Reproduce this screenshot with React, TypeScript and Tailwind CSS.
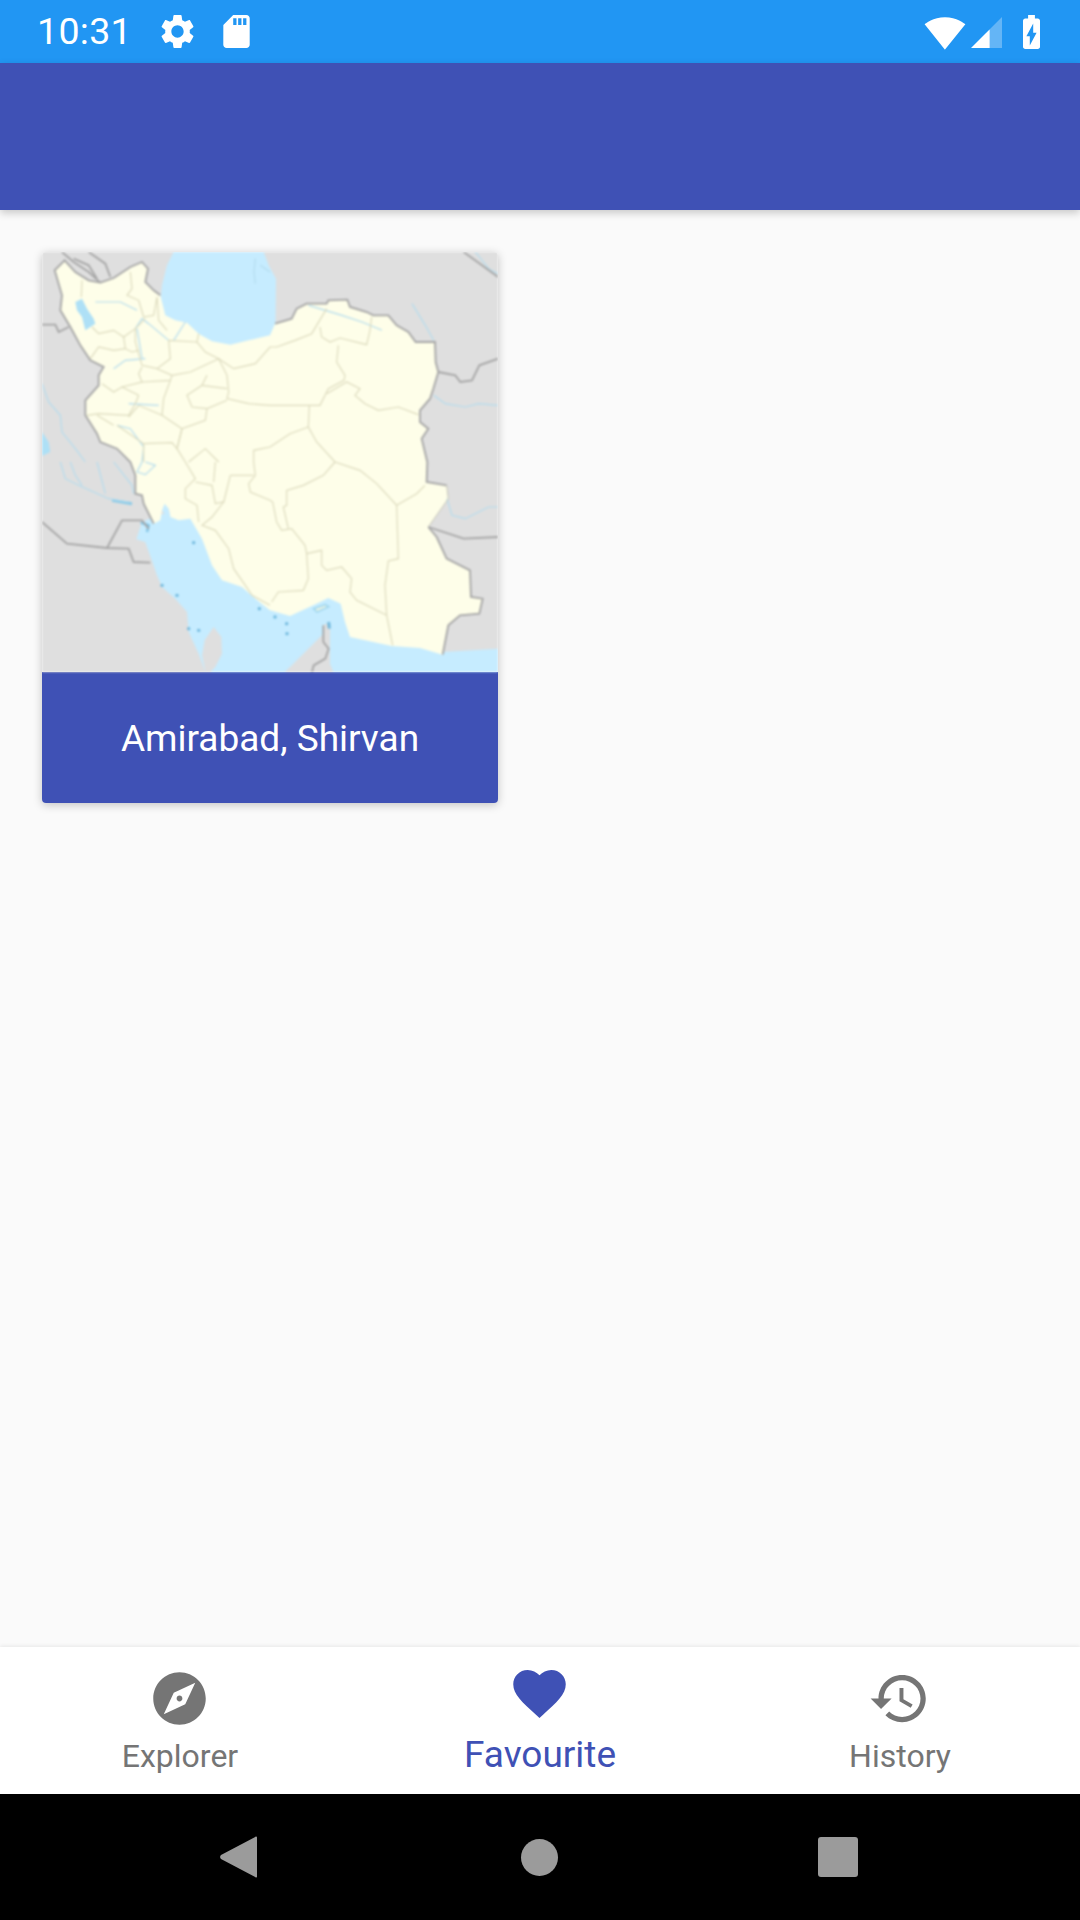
import * as React from 'react';

const iran = "68,25 100,60 140,85 175,92 215,78 265,45 300,30 318,50 310,90 335,115 355,130 360,150 370,190 400,205 435,212 470,245 510,268 565,278 620,265 684,250 699,215 749,200 764,170 794,155 854,155 859,145 916,143 924,165 974,180 994,190 1039,190 1064,220 1099,240 1121,270 1179,270 1181,330 1189,360 1174,410 1164,440 1134,475 1134,510 1159,530 1139,560 1156,630 1154,690 1214,700 1219,740 1159,825 1184,855 1214,920 1284,955 1287,1035 1322,1040 1312,1085 1254,1090 1219,1120 1202,1208 1134,1188 1049,1182 924,1155 909,1110 896,1055 859,1038 814,1060 744,1092 684,1075 640,1040 600,1005 540,985 510,940 480,860 445,800 410,805 385,795 380,770 360,775 355,805 335,815 305,755 300,730 280,725 280,670 265,630 225,590 175,570 165,545 130,490 130,445 170,400 170,370 185,345 145,325 115,280 85,225 55,175 60,130 38,55";
const caspian = "395,0 665,0 680,40 702,80 700,258 684,262 620,270 565,283 510,273 470,250 435,217 400,210 370,195 355,150 360,100 375,40";
const gulf = "300,810 283,862 310,870 345,970 360,1005 400,1040 435,1080 440,1140 470,1205 490,1260 729,1260 844,1145 844,1120 864,1110 864,1235 874,1260 1368,1260 1368,1190 1202,1200 900,1000 500,760 345,790";
const qatar = "480,1210 488,1165 515,1125 538,1155 540,1205 520,1245 505,1260 490,1260";
const urmia = "100,150 120,140 135,170 155,200 160,215 130,235 120,195 105,175";

// outer borders of the countries
const borders = [
    "355,130 335,115 310,90 318,50 300,30 265,45 215,78 175,92 140,85 100,60 68,25 38,55 60,130 55,175 85,225 115,280 145,325 185,345 170,370 170,400 130,445 130,490 165,545 175,570 225,590 265,630 280,670 280,725 300,730 305,755 335,815",
    "699,215 749,200 764,170 794,155 854,155 859,145 916,143 924,165 974,180 994,190 1039,190 1064,220 1099,240 1121,270 1179,270 1181,330 1189,360 1174,410 1164,440 1134,475 1134,510 1159,530 1139,560 1156,630 1154,690 1214,700",
    "1159,825 1184,855 1214,920 1284,955 1287,1035 1322,1040 1312,1085 1254,1090 1219,1120 1202,1208",
    "60,0 95,30 140,60 175,92",
    "95,20 140,40 165,80",
    "140,0 190,35 205,75",
    "0,218 40,218 50,240 80,225",
    "1265,0 1320,40 1368,75",
    "1189,360 1240,370 1255,390 1290,385 1312,340 1368,320",
    "1159,825 1265,860 1368,855",
    "0,810 75,875 195,888 260,890 275,930 325,932",
    "195,888 240,805 300,805 320,830",
    "844,1120 844,1170 860,1190 850,1220 815,1240 810,1260",
];

// provinces
const provinces = [
    "265,60 270,110 255,130 290,145 305,195 335,190 345,135 350,205 375,235",
    "120,85 118,135",
    "150,225 170,245 215,235 245,255 280,230 310,200",
    "245,255 250,290 270,300 290,295",
    "145,320 170,285 215,295 250,290",
    "280,230 280,270 300,340 345,350 385,320 380,265 465,270",
    "470,245 465,270 490,300 530,320 445,360 390,370 345,350",
    "530,320 575,350 640,335 684,285 704,285 759,265 809,245 854,170",
    "530,320 555,370 560,420 555,440 620,455 684,460 834,460 859,410 906,385 909,370 884,330 889,280",
    "300,345 290,365 300,390 240,405 215,420 180,395",
    "300,390 385,385 390,370",
    "385,385 365,440 360,490 420,530 405,590",
    "290,430 240,405",
    "290,430 280,455 260,490 170,485 135,490",
    "165,490 215,520",
    "260,495 290,460 360,490",
    "225,520 305,575 390,572 405,590 420,530 490,505 495,470 555,445",
    "495,370 480,400 435,430 450,465 495,470",
    "480,400 555,410",
    "405,590 430,630 460,680 430,710 430,740 465,760 470,810",
    "440,630 490,590 530,630",
    "305,575 305,630",
    "834,225 839,255 864,270 894,258 974,278 984,235 989,195",
    "854,425 914,390 954,410 939,430 969,455 1009,475 1069,465 1129,488",
    "802,460 799,525 824,570 879,630 954,655 1004,695 1064,760 1069,920 1039,927 1029,1000 1034,1090 1052,1180",
    "1064,760 1124,725 1149,700",
    "799,525 744,545 684,585 635,595 635,630 640,670 620,695 625,720 684,745 692,750 704,810 719,835 749,830 789,880 794,905 799,980 784,1015 709,1020 689,1050",
    "879,630 844,670 784,700 734,715 734,760 724,765 739,830",
    "794,905 839,895 839,940 854,955 899,945 929,980 924,1020 944,1045 1034,1090",
    "460,690 510,700 520,755 545,750 510,795 480,820 520,835 560,890 575,950 610,1000 630,1030 684,1060",
    "520,630 515,690",
    "565,670 545,750",
    "565,670 635,670",
];

const rivers = [
    "55,630 70,680 110,700 200,740 260,750",
    "85,630 100,670 120,700",
    "165,630 190,725",
    "215,630 270,700 275,725",
    "0,395 20,450 55,490 60,540 100,590 130,630",
    "160,150 235,150 285,175",
    "215,350 250,325 310,320",
    "280,230 300,200 320,215 380,265",
    "285,230 300,320",
    "260,455 350,460",
    "225,520 265,530 305,585 300,630 285,660 310,668 340,640 310,630",
    "395,265 430,210",
    "800,160 900,190 960,210 1020,235",
    "1110,155 1150,220 1175,265",
    "1175,430 1210,455 1270,465 1310,455 1368,460",
    "1300,0 1340,50 1368,65",
    "1215,740 1230,790 1270,800 1340,765 1368,765",
    "640,20 636,60 640,95",
    "655,40 684,60",
];

// little dark blue dots along the gulf coast
const dots = [[455, 872], [405, 1030], [360, 1000], [652, 1070], [734, 1115], [699, 1095], [440, 1130], [470, 1135], [735, 1145]];

const MapPicture = () => (
    <svg viewBox="0 0 1368 1260" preserveAspectRatio="none" className="w-full h-full block blur-[1px]">
        <rect width="1368" height="1260" fill="#dfdfdf" />
        <polygon points={caspian} fill="#c6ecff" />
        <polygon points={gulf} fill="#c6ecff" />
        <polygon points={qatar} fill="#dfdfdf" />
        <polygon points={iran} fill="#fefee9" />
        <polygon points={urmia} fill="#aee0f6" />
        <polygon points="0,540 20,570 25,600 0,612" fill="#aee0f6" />
        <polygon points="360,775 368,755 380,770 385,795 370,790" fill="#c6ecff" />
        <polyline points="210,745 270,755" fill="none" stroke="#8ccbe8" strokeWidth="9" />
        <polyline points="296,812 320,820 315,840" fill="none" stroke="#7fc4e6" strokeWidth="7" />
        <polygon points="815,1070 850,1058 860,1064 825,1080" fill="#eef6e6" stroke="#a0d6ee" strokeWidth="5" />
        <polyline points="860,1110 862,1130" fill="none" stroke="#6fb8dd" strokeWidth="9" />
        {dots.map(([x, y], index) => (
            <circle key={index} cx={x} cy={y} r="5" fill="#6fb8dd" />
        ))}
        {rivers.map((pts, index) => (
            <polyline key={index} points={pts} fill="none" stroke="#b4dcee" strokeWidth="3.5" />
        ))}
        {provinces.map((pts, index) => (
            <polyline key={index} points={pts} fill="none" stroke="#dddbbe" strokeWidth="3.5" />
        ))}
        <polyline points="1214,700 1219,740 1159,825" fill="none" stroke="#c4c4b8" strokeWidth="3" />
        {borders.map((pts, index) => (
            <polyline key={index} points={pts} fill="none" stroke="#a6a6a6" strokeWidth="5.5" />
        ))}
    </svg>
);

const NavItem = ({ path, label, active }: { path: string, label: string, active?: boolean }) => (
    <div className={`flex-1 flex flex-col items-center ${active ? 'text-[#3f51b5] pt-[15px]' : 'text-[#757575] pt-[20px]'}`}>
        <svg viewBox="0 0 24 24" fill="currentColor" className="w-[63px] h-[63px] -ml-[2px]">
            <path d={path} />
        </svg>
        <span className={active ? 'text-[37px] leading-[43px] mt-[8px]' : 'text-[32px] leading-[37px] mt-[8px]'}>{label}</span>
    </div>
);

export default function App() {
    return (
        <div className="w-[1080px] h-[1920px] flex flex-col bg-[#fafafa] overflow-hidden font-['Roboto',sans-serif]">
            <div className="h-[63px] bg-[#2196f3] flex items-center text-white shrink-0">
                <span className="ml-[37px] text-[37.5px] leading-none tracking-[0.3px]">10:31</span>
                <svg viewBox="0 0 24 24" fill="currentColor" className="w-[41px] h-[41px] ml-[25px] -mt-[1px]">
                    <path d="M19.14 12.94c.04-.3.06-.61.06-.94 0-.32-.02-.64-.07-.94l2.03-1.58c.18-.14.23-.41.12-.61l-1.92-3.32c-.12-.22-.37-.29-.59-.22l-2.39.96c-.5-.38-1.03-.7-1.62-.94l-.36-2.54c-.04-.24-.24-.41-.48-.41h-3.84c-.24 0-.43.17-.47.41l-.36 2.54c-.59.24-1.13.57-1.62.94l-2.39-.96c-.22-.08-.47 0-.59.22L2.74 8.87c-.12.21-.08.47.12.61l2.03 1.58c-.05.3-.09.63-.09.94s.02.64.07.94l-2.03 1.58c-.18.14-.23.41-.12.61l1.92 3.32c.12.22.37.29.59.22l2.39-.96c.5.38 1.03.7 1.62.94l.36 2.54c.05.24.24.41.48.41h3.84c.24 0 .44-.17.47-.41l.36-2.54c.59-.24 1.13-.56 1.62-.94l2.39.96c.22.08.47 0 .59-.22l1.92-3.32c.12-.22.07-.47-.12-.61l-2.01-1.58zM12 15.6c-1.98 0-3.6-1.62-3.6-3.6s1.62-3.6 3.6-3.6 3.6 1.62 3.6 3.6-1.62 3.6-3.6 3.6z" />
                </svg>
                <svg viewBox="4 2 16 20" fill="currentColor" className="w-[27px] h-[33px] ml-[25px]">
                    <path d="M18 2h-8L4.02 8 4 20c0 1.1.9 2 2 2h12c1.1 0 2-.9 2-2V4c0-1.1-.9-2-2-2zm-6 6h-2V4h2v4zm3 0h-2V4h2v4zm3 0h-2V4h2v4z" />
                </svg>
                <div className="ml-auto flex items-center">
                    <svg viewBox="0 0 24 24" fill="currentColor" className="w-[42px] h-[42px] mt-[2px]">
                        <path d="M12.01 21.49L23.64 7c-.45-.34-4.93-4-11.64-4C5.28 3 .81 6.66.36 7l11.63 14.5.01.01.01-.01z" />
                    </svg>
                    <svg viewBox="0 0 31 31" fill="currentColor" className="w-[32px] h-[32px] ml-[4px]">
                        <path d="M1 31L31 1v30z" opacity="0.3" />
                        <path d="M1 31L19 13v18z" />
                    </svg>
                    <svg viewBox="7 2 10 20" fill="currentColor" className="w-[19px] h-[34px] ml-[20px] mr-[39px]">
                        <path d="M15.67 4H14V2h-4v2H8.33C7.6 4 7 4.6 7 5.33v15.33C7 21.4 7.6 22 8.33 22h7.33c.74 0 1.34-.6 1.34-1.33V5.33C17 4.6 16.4 4 15.67 4zM11 20v-5.5H9L13 7v5.5h2L11 20z" />
                    </svg>
                </div>
            </div>
            <div className="h-[147px] bg-[#3f51b5] shrink-0 shadow-[0_3px_8px_rgba(0,0,0,0.2)] z-10"></div>
            <div className="flex-1 pt-[42px] pl-[42px]">
                <div className="w-[456px] rounded-[4px] overflow-hidden shadow-[0_2px_10px_rgba(0,0,0,0.22)]">
                    <div className="h-[420px]">
                        <MapPicture />
                    </div>
                    <div className="h-[131px] pt-[3px] bg-[#3f51b5] flex items-center justify-center text-white text-[37px]">
                        Amirabad, Shirvan
                    </div>
                </div>
            </div>
            <div className="h-[147px] bg-white flex shrink-0 shadow-[0_-1px_4px_rgba(0,0,0,0.08)] z-10">
                <NavItem label="Explorer" path="M12 10.9c-.61 0-1.1.49-1.1 1.1s.49 1.1 1.1 1.1c.61 0 1.1-.49 1.1-1.1s-.49-1.1-1.1-1.1zM12 2C6.48 2 2 6.48 2 12s4.48 10 10 10 10-4.48 10-10S17.52 2 12 2zm2.19 12.19L6 18l3.81-8.19L18 6l-3.81 8.19z" />
                <NavItem active label="Favourite" path="M12 21.35l-1.45-1.32C5.4 15.36 2 12.28 2 8.5 2 5.42 4.42 3 7.5 3c1.74 0 3.41.81 4.5 2.09C13.09 3.81 14.76 3 16.5 3 19.58 3 22 5.42 22 8.5c0 3.78-3.4 6.86-8.55 11.54L12 21.35z" />
                <NavItem label="History" path="M13 3c-4.97 0-9 4.03-9 9H1l3.89 3.89.07.14L9 12H6c0-3.87 3.13-7 7-7s7 3.13 7 7-3.13 7-7 7c-1.93 0-3.68-.79-4.94-2.06l-1.42 1.42C8.27 19.99 10.51 21 13 21c4.97 0 9-4.03 9-9s-4.03-9-9-9zm-1 5v5l4.28 2.54.72-1.21-3.5-2.08V8H12z" />
            </div>
            <div className="h-[126px] bg-black shrink-0 flex items-center justify-center relative text-[#9b9b9b]">
                <svg viewBox="0 0 38 42" fill="currentColor" className="w-[38px] h-[42px] absolute left-[220px] top-[42px]">
                    <path d="M37 1.5V40.5C37 41.5 36 42 35.2 41L1 23C-.2 22 -.2 20 1 19L35.2 1C36 .1 37 .5 37 1.5z" />
                </svg>
                <div className="w-[37px] h-[37px] rounded-full bg-[#9b9b9b] -ml-[2px]"></div>
                <div className="w-[40px] h-[40px] rounded-[3px] bg-[#9b9b9b] absolute left-[818px] top-[43px]"></div>
            </div>
        </div>
    );
}
